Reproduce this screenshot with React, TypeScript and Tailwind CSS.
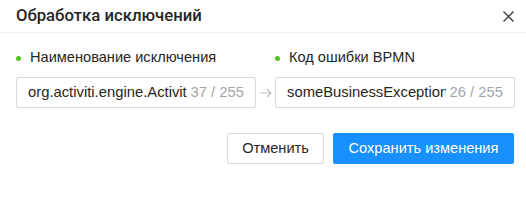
import React from 'react';

const font = { fontFamily: '"Liberation Sans", Arial, sans-serif' };

function Field({ label, value, count }: { label: string; value: string; count: string }) {
  return (
    <div className="flex w-[240px] flex-col">
      <div className="mb-[8px] flex h-[22px] items-center text-[14.6px] text-[#262626]">
        <span className="mr-[9px] h-[5px] w-[5px] rounded-full bg-[#52c41a]" />
        {label}
      </div>
      <div className="flex h-[31px] items-center rounded-[2px] border border-[#d9d9d9] bg-white pl-[11px] pr-[11px] text-[14.8px]">
        <div className="min-w-0 flex-1 overflow-hidden">
          <span className="block whitespace-nowrap text-[#262626]">{value}</span>
        </div>
        <span className="ml-[4px] shrink-0 text-[#a6a6a6]">{count}</span>
      </div>
    </div>
  );
}

export default function App() {
  return (
    <div className="h-[200px] w-[526px] bg-white" style={font}>
      <div className="flex h-[33px] items-center justify-between border-b border-[#f0f0f0] pl-4 pr-[8px]">
        <h2 className="font-['Roboto',sans-serif] text-[16.7px] font-medium text-[#262626]">Обработка исключений</h2>
        <button type="button" className="flex h-5 w-5 items-center justify-center text-[#404040]">
          <svg width="11" height="11" viewBox="0 0 11 11" fill="none" stroke="currentColor" strokeWidth="1.4">
            <path d="M0.5 0.5 L10.5 10.5 M10.5 0.5 L0.5 10.5" />
          </svg>
        </button>
      </div>
      <div className="pl-4 pr-[11px] pt-[14px]">
        <div className="flex items-end">
          <Field label="Наименование исключения" value="org.activiti.engine.ActivitiException" count="37 / 255" />
          <div className="flex h-[31px] w-[20px] items-center justify-center text-[#bfbfbf]">
            <svg width="12" height="10" viewBox="0 0 12 10" fill="none" stroke="currentColor" strokeWidth="1.1">
              <path d="M0.5 5 H11 M7 1 L11 5 L7 9" />
            </svg>
          </div>
          <Field label="Код ошибки BPMN" value="someBusinessExceptionCode" count="26 / 255" />
        </div>
        <div className="mt-[25px] flex justify-end gap-[9px] pr-px">
          <button type="button" className="h-[31px] w-[97px] rounded-[2px] border border-[#d9d9d9] bg-white text-[14.6px] text-[#262626]">
            Отменить
          </button>
          <button type="button" className="h-[31px] w-[181px] rounded-[2px] bg-[#1890ff] text-[14.6px] text-white">
            Сохранить изменения
          </button>
        </div>
      </div>
    </div>
  );
}
